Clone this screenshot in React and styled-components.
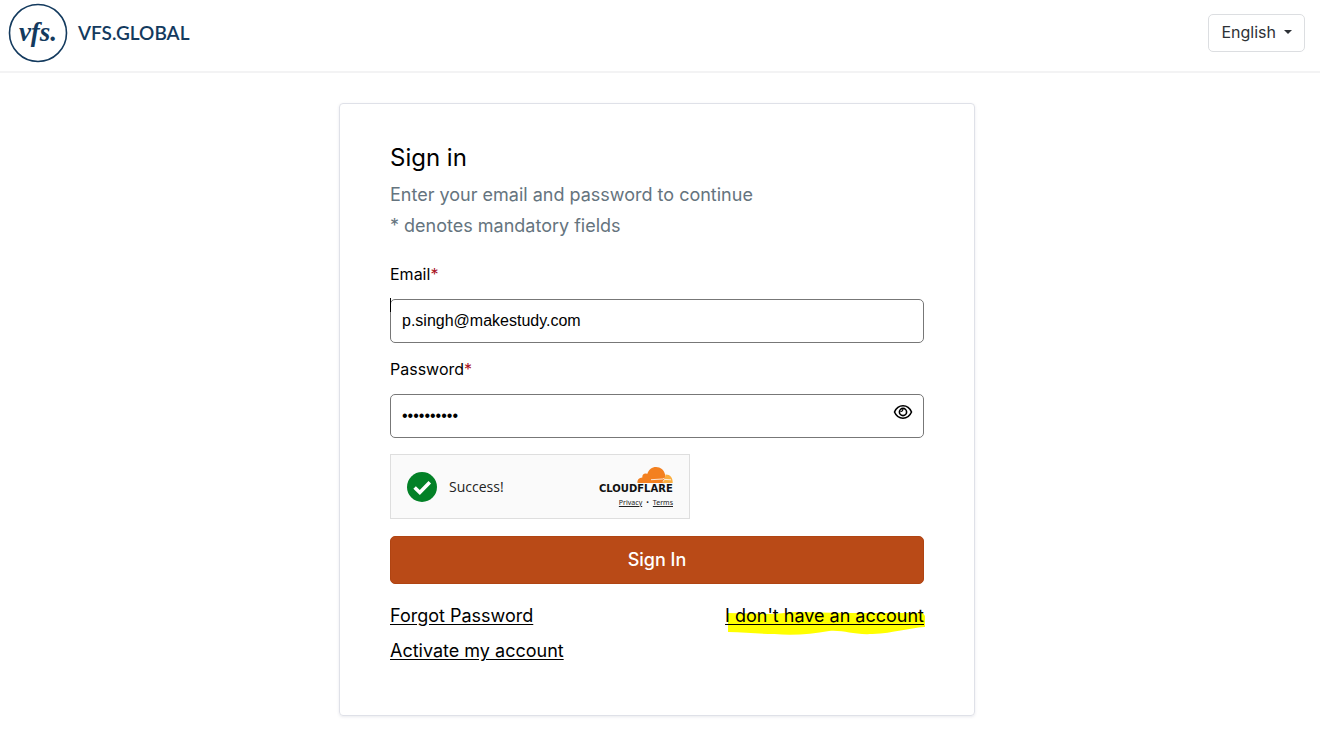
import React from "react";
import styled, { createGlobalStyle } from "styled-components";

const GlobalStyle = createGlobalStyle`
  *, *::before, *::after { box-sizing: border-box; }
  body {
    margin: 0;
    background: #fff;
    color: #000;
    font-family: Inter, "Liberation Sans", sans-serif;
    font-size: 16px;
    line-height: 24px;
  }
`;

const Header = styled.header`
  display: flex;
  align-items: center;
  justify-content: space-between;
  padding: 3px 15px 8px 8px;
  border-bottom: 2px solid #f3f3f4;
`;

const Brand = styled.a`
  display: flex;
  align-items: center;
  gap: 10px;
  color: #133a5e;
  text-decoration: none;
  font-family: Lato, sans-serif;
  font-size: 19px;
  font-weight: 600;
`;

const LanguageButton = styled.button`
  display: flex;
  align-items: center;
  gap: 8px;
  height: 38px;
  padding: 0 12px 2px;
  border: 1px solid #dcdee1;
  border-radius: 5px;
  background: #fff;
  color: #2d3136;
  font: 400 16px/24px Inter, sans-serif;
`;

const Caret = styled.span`
  border: 4px solid transparent;
  border-top-color: currentColor;
  border-bottom-width: 0;
`;

const Main = styled.main`
  display: flex;
  justify-content: center;
  padding: 30px 22px 15px 16px;
`;

const Card = styled.section`
  width: 100%;
  max-width: 636px;
  padding: 38px 50px 50px;
  border: 1px solid #dfe1e8;
  border-radius: 4px;
  box-shadow: 0 1px 3px rgba(40, 50, 90, 0.1);
`;

const Title = styled.h1`
  margin: 0 0 5px;
  font-size: 24px;
  font-weight: 400;
  line-height: 32px;
`;

const Hint = styled.p`
  margin: 0;
  color: #65747e;
  font-size: 18px;
  line-height: 31px;
`;

const Form = styled.form`
  margin-top: 21px;
`;

const Field = styled.div`
  display: flex;
  flex-direction: column;
  gap: 13px;
  margin-bottom: ${(p) => (p.$last ? 16 : 14)}px;
`;

const Required = styled.span`
  color: #a80f22;
`;

const InputWrap = styled.div`
  position: relative;
  display: flex;

  &::before {
    content: "";
    display: ${(p) => (p.$cursor ? "block" : "none")};
    position: absolute;
    left: 0;
    top: -1px;
    width: 1px;
    height: 14px;
    background: #000;
  }
`;

const Input = styled.input`
  width: 100%;
  height: 44px;
  padding: 0 11px;
  border: 1px solid #777;
  border-radius: 5px;
  background: #fff;
  color: #000;
  font: 16px/24px "Liberation Sans", Arial, sans-serif;
`;

const RevealButton = styled.button`
  position: absolute;
  right: 11px;
  top: 8px;
  display: flex;
  padding: 0;
  border: 0;
  background: none;
`;

const Captcha = styled.div`
  display: flex;
  align-items: center;
  width: 300px;
  max-width: 100%;
  height: 65px;
  padding: 0 16px;
  border: 1px solid #dedede;
  background: #fafafa;
`;

const CaptchaStatus = styled.span`
  flex: 1;
  margin-left: 12px;
  color: #232323;
  font: 14px/20px "Open Sans", sans-serif;
`;

const Provider = styled.div`
  display: flex;
  flex-direction: column;
  align-items: flex-end;
`;

const ProviderLinks = styled.div`
  display: flex;
  gap: 4px;
  color: #232323;
  font: 7px/10px "Noto Sans", sans-serif;
  margin-top: 4px;

  a { color: inherit; text-underline-offset: 1px; }
`;

const SubmitButton = styled.button`
  display: block;
  width: 100%;
  height: 48px;
  margin-top: 17px;
  padding: 0;
  border: 1px solid #b04412;
  border-radius: 5px;
  background: #b94a17;
  color: #fff;
  font: 500 18px/28px Inter, sans-serif;
`;

const Links = styled.nav`
  display: flex;
  flex-wrap: wrap;
  justify-content: space-between;
  gap: 7px 20px;
  margin-top: 18px;
`;

const TextLink = styled.a`
  position: relative;
  color: #000;
  font-size: 18px;
  line-height: 28px;
  text-underline-offset: 2px;
`;

const Marker = styled.svg`
  position: absolute;
  left: 0;
  top: 8px;
  z-index: -1;
  width: 100%;
  height: 26px;
  overflow: visible;
`;

const VfsMark = () => (
  <svg width="60" height="60" viewBox="0 0 60 60" aria-hidden="true">
    <circle cx="30" cy="30" r="28.5" fill="none" stroke="#133a5e" strokeWidth="1.6" />
    <text
      x="30"
      y="38"
      textAnchor="middle"
      fill="#133a5e"
      fontFamily="Liberation Serif, serif"
      fontSize="27"
      fontStyle="italic"
      fontWeight="700"
    >
      vfs.
    </text>
  </svg>
);

const EyeIcon = () => (
  <svg width="20" height="20" viewBox="0 0 20 20" fill="none" stroke="#000" strokeWidth="1.6" aria-hidden="true">
    <path d="M1.5 10C3.2 6 6.3 3.8 10 3.8s6.8 2.2 8.5 6.2c-1.700 4-4.800 6.200-8.500 6.200S3.200 14 1.500 10Z" />
    <circle cx="10" cy="10" r="3.600" />
    <path d="M7.500 9.200a1.700 1.700 0 0 0 2.200-2.200" strokeWidth="1.200" />
  </svg>
);

const SuccessIcon = () => (
  <svg width="30" height="30" viewBox="0 0 30 30" aria-hidden="true">
    <circle cx="15" cy="15" r="15" fill="#038127" />
    <path d="m7.600 15.500 5.200 5 10-10.200" fill="none" stroke="#fff" strokeWidth="3.600" />
  </svg>
);

const CloudflareLogo = () => (
  <svg width="74" height="28" viewBox="0 0 74 28" role="img" aria-label="Cloudflare">
    <path
      d="M38.500 17c-.4-3.300 1.600-5.500 4.800-5.600-.3-2.900 2.500-4.700 4.900-3.400C49.800 3.600 53 1 57 1c4.600 0 8 3 9 7.200l.5 3.300L64 17Z"
      fill="#f38020"
    />
    <path d="M66.600 8.400c4.300-.2 7.400 3.300 7.100 8.600H63.500c1.700-2.500 2.600-5.700 3.100-8.600Z" fill="#faae40" />
    <path d="M52 13.700 63.500 13l2-.8M64 15.600l1.500-2.200 6.500.4" fill="none" stroke="#fff" strokeWidth=".8" />
    <text x="0" y="26" fill="#111" fontFamily="DejaVu Sans, sans-serif" fontSize="10" fontWeight="700">
      CLOUDFLARE
    </text>
  </svg>
);

export default function App() {
  return (
    <>
      <GlobalStyle />
      <Header>
        <Brand href="#">
          <VfsMark />
          VFS.GLOBAL
        </Brand>
        <LanguageButton type="button" aria-haspopup="listbox">
          English
          <Caret />
        </LanguageButton>
      </Header>
      <Main>
        <Card>
          <Title>Sign in</Title>
          <Hint>Enter your email and password to continue</Hint>
          <Hint>* denotes mandatory fields</Hint>
          <Form onSubmit={(e) => e.preventDefault()}>
            <Field>
              <label htmlFor="email">
                Email<Required>*</Required>
              </label>
              <InputWrap $cursor>
                <Input id="email" type="email" defaultValue="p.singh@makestudy.com" />
              </InputWrap>
            </Field>
            <Field $last>
              <label htmlFor="password">
                Password<Required>*</Required>
              </label>
              <InputWrap>
                <Input id="password" type="password" defaultValue="makestudy1" />
                <RevealButton type="button" aria-label="Show password">
                  <EyeIcon />
                </RevealButton>
              </InputWrap>
            </Field>
            <Captcha>
              <SuccessIcon />
              <CaptchaStatus>Success!</CaptchaStatus>
              <Provider>
                <CloudflareLogo />
                <ProviderLinks>
                  <a href="#">Privacy</a>
                  <span>•</span>
                  <a href="#">Terms</a>
                </ProviderLinks>
              </Provider>
            </Captcha>
            <SubmitButton type="submit">Sign In</SubmitButton>
          </Form>
          <Links>
            <TextLink href="#">Forgot Password</TextLink>
            <TextLink href="#">
              <Marker viewBox="0 0 197 26" preserveAspectRatio="none" aria-hidden="true">
                <path
                  d="M3 3 48 4 70 2l50 1 76 0 2 3v11c-17 1-30 6-52 7-20 1-27-4-43-3-17 3-36 5-54 3-16 0-30-2-46-2Z"
                  fill="#ff0"
                />
              </Marker>
              I don't have an account
            </TextLink>
            <TextLink href="#">Activate my account</TextLink>
          </Links>
        </Card>
      </Main>
    </>
  );
}
